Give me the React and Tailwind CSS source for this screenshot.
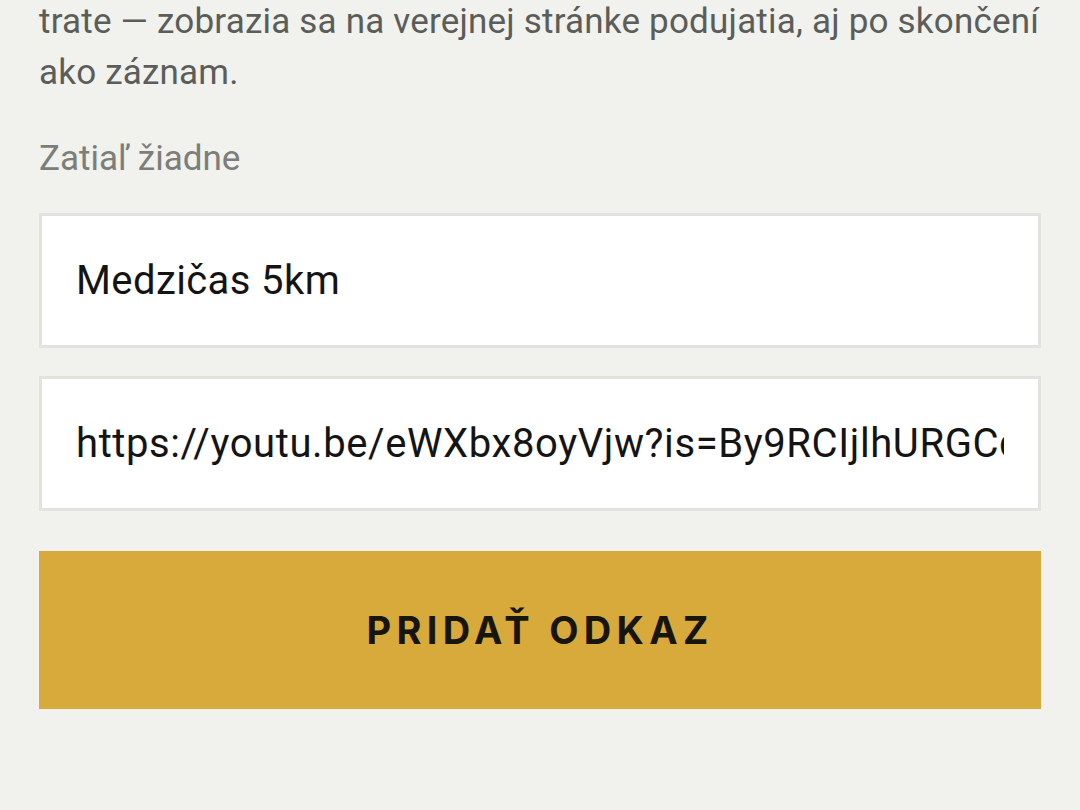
import React from "react";

const bodyFont = "font-['Roboto','Noto_Sans',sans-serif]";

export default function App() {
  return (
    <div className={`min-h-[810px] w-[1080px] overflow-hidden bg-[#f1f1ed] px-[39px] ${bodyFont}`}>
      <p className="-mt-[4px] text-[35px] leading-[51px] tracking-[0.2px] text-[#5a5d59]">
        trate — zobrazia sa na verejnej stránke podujatia, aj po skončení ako záznam.
      </p>

      <p className="mt-[35px] text-[35px] leading-[51px] text-[#7b7e79]">Zatiaľ žiadne</p>

      <div className="mt-[29px] flex flex-col gap-[28px]">
        <input
          type="text"
          defaultValue="Medzičas 5km"
          className="h-[135px] w-full border-[3px] border-[#e3e3de] bg-white px-[34px] text-[40px] tracking-[0.4px] text-[#141414] outline-none"
        />
        <input
          type="text"
          defaultValue="https://youtu.be/eWXbx8oyVjw?is=By9RCIjlhURGCqT4mZ"
          className="h-[135px] w-full border-[3px] border-[#e3e3de] bg-white px-[34px] text-[40px] tracking-[0.6px] text-[#141414] outline-none"
        />
      </div>

      <button className="mt-[40px] flex h-[158px] w-full items-center justify-center bg-[#d8a93b] font-['Inter','Liberation_Sans',sans-serif] text-[38px] font-bold tracking-[0.14em] text-[#17150f]">
        PRIDAŤ ODKAZ
      </button>
    </div>
  );
}
